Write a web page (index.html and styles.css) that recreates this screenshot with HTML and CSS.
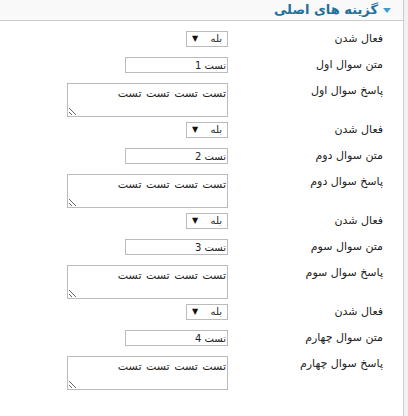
FILE: index.html
```html
<!DOCTYPE html>
<html lang="fa">
<head>
<meta charset="utf-8">
<link rel="stylesheet" href="styles.css">
</head>
<body>
<div class="box" dir="rtl">
  <div class="box-head">
    <svg class="toggle" width="8" height="5" viewBox="0 0 8 5"><path d="M0 0H8L4 5Z" fill="#3a9fd0"/></svg>
    <span class="title">گزینه های اصلی</span>
  </div>
  <div class="fields">
    <div class="row"><label class="lbl">فعال شدن</label><div class="fld"><span class="sel"><span>بله</span><span class="arr">▼</span></span></div></div>
    <div class="row"><label class="lbl">متن سوال اول</label><div class="fld"><input class="txt" type="text" value="تست 1"></div></div>
    <div class="row area"><label class="lbl">پاسخ سوال اول</label><div class="fld"><textarea class="ta">تست تست تست تست</textarea></div></div>

    <div class="row"><label class="lbl">فعال شدن</label><div class="fld"><span class="sel"><span>بله</span><span class="arr">▼</span></span></div></div>
    <div class="row"><label class="lbl">متن سوال دوم</label><div class="fld"><input class="txt" type="text" value="تست 2"></div></div>
    <div class="row area"><label class="lbl">پاسخ سوال دوم</label><div class="fld"><textarea class="ta">تست تست تست تست</textarea></div></div>

    <div class="row"><label class="lbl">فعال شدن</label><div class="fld"><span class="sel"><span>بله</span><span class="arr">▼</span></span></div></div>
    <div class="row"><label class="lbl">متن سوال سوم</label><div class="fld"><input class="txt" type="text" value="تست 3"></div></div>
    <div class="row area"><label class="lbl">پاسخ سوال سوم</label><div class="fld"><textarea class="ta">تست تست تست تست</textarea></div></div>

    <div class="row"><label class="lbl">فعال شدن</label><div class="fld"><span class="sel"><span>بله</span><span class="arr">▼</span></span></div></div>
    <div class="row"><label class="lbl">متن سوال چهارم</label><div class="fld"><input class="txt" type="text" value="تست 4"></div></div>
    <div class="row area"><label class="lbl">پاسخ سوال چهارم</label><div class="fld"><textarea class="ta">تست تست تست تست</textarea></div></div>
  </div>
</div>
</body>
</html>
```

FILE: styles.css
```css
html, body {
  margin: 0;
  padding: 0;
  background: #f1f1f1;
}
body {
  font-family: "DejaVu Sans", sans-serif;
  font-size: 11px;
  color: #222;
}
.box {
  width: 403px;
  min-height: 416px;
  background: #fff;
  border-right: 1px solid #ccc;
}
.box-head {
  height: 20px;
  background: #f9f9f9;
  border-bottom: 1px solid #ccc;
  display: flex;
  align-items: center;
  gap: 5px;
  padding-right: 12px;
}
.toggle {
  display: block;
  margin-top: 1px;
}
.title {
  color: #23709a;
  font-weight: bold;
  font-size: 13px;
  line-height: 20px;
}
.fields {
  padding-top: 5px;
}
.row {
  display: grid;
  grid-template-columns: 175px auto;
  padding: 5px 0;
}
.row.area {
  padding-bottom: 0;
}
.lbl {
  padding-right: 20px;
  line-height: 16px;
  align-self: start;
}
.fld {
  justify-self: start;
  display: flex;
}
.sel {
  box-sizing: border-box;
  width: 42px;
  height: 16px;
  border: 1px solid #bbb;
  display: flex;
  justify-content: space-between;
  align-items: center;
  padding: 0 5px;
  line-height: 14px;
  font-size: 10px;
}
.arr {
  font-size: 8px;
  color: #111;
}
.txt {
  box-sizing: border-box;
  width: 103px;
  height: 16px;
  margin: 0;
  padding: 0 1px;
  border: 1px solid #bbb;
  font-family: "DejaVu Sans", sans-serif;
  font-size: 10px;
  color: #222;
  direction: rtl;
  outline: none;
}
.ta {
  box-sizing: border-box;
  display: block;
  width: 161px;
  height: 34px;
  margin: 0;
  padding: 3px 1px;
  border: 1px solid #bbb;
  font-family: "DejaVu Sans", sans-serif;
  font-size: 11px;
  word-spacing: 1px;
  color: #222;
  direction: rtl;
}
```
